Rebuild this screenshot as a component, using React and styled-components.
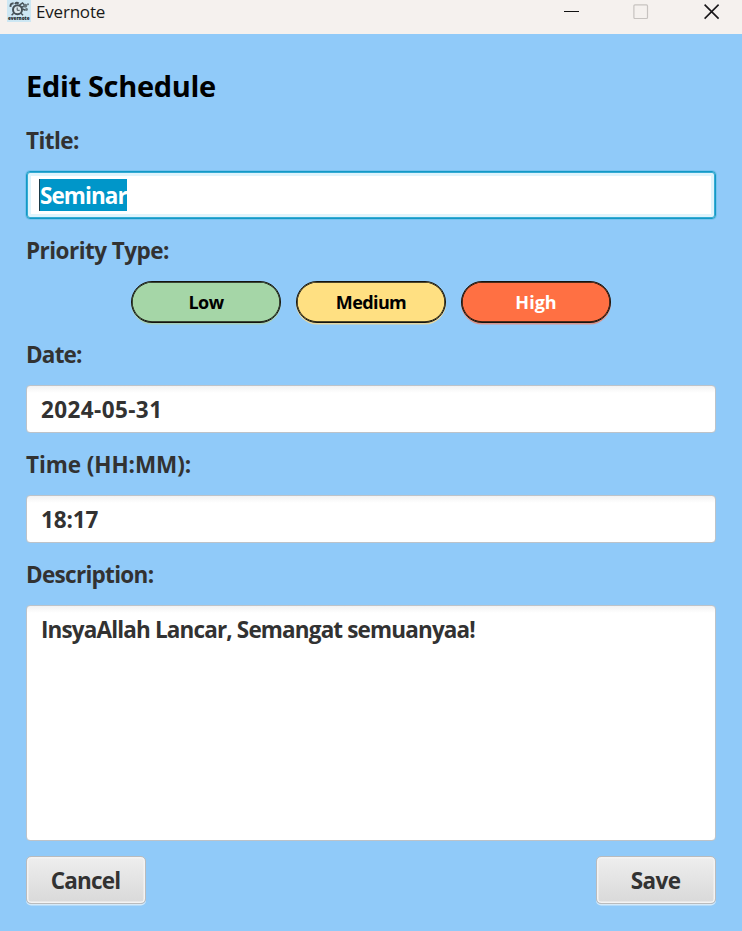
import React from "react";
import styled, { createGlobalStyle } from "styled-components";

const GlobalStyle = createGlobalStyle`
  * { box-sizing: border-box; }
  body { margin: 0; }
`;

const Window = styled.div`
  width: 742px;
  height: 931px;
  display: flex;
  flex-direction: column;
  overflow: hidden;
  background: #90caf9;
  color: #323232;
  font-family: "Open Sans", "Noto Sans", sans-serif;
`;

const TitleBar = styled.header`
  height: 34px;
  flex: none;
  display: flex;
  align-items: flex-start;
  justify-content: space-between;
  background: #f5f1ee;
  color: #191919;
`;

const AppName = styled.div`
  display: flex;
  padding-left: 7px;
  gap: 5px;
  font-size: 17px;
  line-height: 24px;
`;

const WindowControls = styled.div`
  display: flex;
  align-items: center;
  gap: 53px;
  height: 24px;
  padding-right: 22px;

  svg:last-child { margin-left: 2px; }
`;

const Form = styled.main`
  flex: 1;
  display: flex;
  flex-direction: column;
  gap: 16px;
  padding: 35px 26px 26px;
`;

const Text = styled.span`
  display: inline-block;
  white-space: pre;
  letter-spacing: ${(p) => p.$track || 0}px;
`;

const Heading = styled.h1`
  margin: 0;
  height: 40px;
  font-size: 29px;
  line-height: 33px;
  font-weight: 700;
  color: #000;
`;

const Label = styled.div`
  height: 30px;
  font-size: 22.5px;
  line-height: 31px;
  font-weight: 700;
`;

const Field = styled.div`
  height: 48px;
  padding: 8px 14px;
  border: 1px solid ${(p) => (p.$focused ? "#1399c6" : "#bdc3c9")};
  border-radius: 4px;
  background: ${(p) => (p.$focused ? "#fff" : "linear-gradient(#f2f2f2, #fff 7px)")};
  box-shadow: ${(p) =>
    p.$focused
      ? "inset 0 0 0 1px #35abd4, inset 0 0 0 4px #dff4fc, 0 0 0 1px #77c2ee"
      : "none"};
  font-size: 22.5px;
  line-height: 31px;
  font-weight: 700;
`;

const TextArea = styled(Field)`
  height: 236px;
  margin-bottom: -1px;
`;

const Selection = styled.span`
  display: block;
  width: 88px;
  height: 32px;
  margin: -1px 0 0 -2px;
  border-left: 1px solid #1d3a48;
  background: #0096c9;
  color: #fff;
  line-height: 33px;
  white-space: nowrap;
`;

const PriorityRow = styled.div`
  display: flex;
  justify-content: center;
  gap: 15px;
`;

const Pill = styled.button`
  width: 150px;
  height: 42px;
  padding: 0;
  border: 1.5px solid #14140f;
  border-radius: 21px;
  background: ${(p) => p.$fill};
  color: ${(p) => p.$ink || "#000"};
  box-shadow: inset 0 0 0 0.7px #14140f, 0 1.5px 0 ${(p) => p.$shade};
  font: 700 18px/38px "Open Sans", "Noto Sans", sans-serif;
`;

const Actions = styled.footer`
  display: flex;
  justify-content: space-between;
`;

const ActionButton = styled.button`
  width: 120px;
  height: 48px;
  padding: 1px 1px 0 0;
  border: 1.5px solid #b9bbbd;
  border-radius: 5px;
  background: linear-gradient(#eeeeee, #d9d9d9);
  box-shadow: inset 0 0 0 1.5px #f3f3f3, 0 1.5px 0 #d5e9f8;
  color: #323232;
  font: 700 22.5px/45px "Open Sans", "Noto Sans", sans-serif;
`;

const ClockLogo = () => (
  <svg width="24" height="22" viewBox="0 0 24 22">
    <rect width="24" height="22" fill="#cde7f3" />
    <g fill="none" stroke="#465157">
      <circle cx="10.5" cy="9.7" r="4.5" strokeWidth="2" fill="#dce9ed" />
      <path d="M3.6 6.8Q3 3.4 6.6 3.2M8 4Q9.5 1.8 11.7 3.5" strokeWidth="2" />
      <path d="M12.5 5.2l3-2.2 2 2M14.5 7.2l5-1.8M15.5 9l3 1.2M6.6 13.2l-2 2M14 13.2l2 2" strokeWidth="1.5" />
      <path d="M10.2 7.5v2.8h2.5" strokeWidth="1" />
    </g>
    <circle cx="18.3" cy="5.8" r="2" fill="#66757c" />
    <circle cx="21" cy="4.2" r="1" fill="#66757c" />
    <circle cx="19.5" cy="9.5" r="1.4" fill="#66757c" />
    <text x="1" y="20" textLength="21.5" lengthAdjust="spacingAndGlyphs" fontFamily="Open Sans" fontSize="5.4" fontWeight="800" fill="#172024">evernote</text>
  </svg>
);

const MinimizeIcon = () => (
  <svg width="16" height="16"><path d="M0 7.5h15" stroke="#111" /></svg>
);

const MaximizeIcon = () => (
  <svg width="16" height="16">
    <rect x=".9" y=".9" width="13.6" height="13.6" rx="1" fill="none" stroke="#c7c3c0" strokeWidth="1.2" />
  </svg>
);

const CloseIcon = () => (
  <svg width="16" height="16"><path d="M.6.6l14 14M14.6.6l-14 14" stroke="#191719" strokeWidth="1.6" /></svg>
);

export default function App() {
  return (
    <Window>
      <GlobalStyle />
      <TitleBar>
        <AppName><ClockLogo /><Text $track={-0.2}>Evernote</Text></AppName>
        <WindowControls><MinimizeIcon /><MaximizeIcon /><CloseIcon /></WindowControls>
      </TitleBar>
      <Form>
        <Heading><Text $track={-0.32}>Edit Schedule</Text></Heading>
        <Label><Text $track={-0.55}>Title:</Text></Label>
        <Field $focused><Selection><Text $track={-0.92}>Seminar</Text></Selection></Field>
        <Label><Text $track={-0.54}>Priority Type:</Text></Label>
        <PriorityRow>
          <Pill $fill="#a5d6a7" $shade="#a5cfbb"><Text $track={-0.5}>Low</Text></Pill>
          <Pill $fill="#ffe082" $shade="#e3d6a2"><Text $track={-0.6}>Medium</Text></Pill>
          <Pill $fill="#ff7043" $shade="#d8938b" $ink="#fff"><Text>High</Text></Pill>
        </PriorityRow>
        <Label><Text $track={-0.8}>Date:</Text></Label>
        <Field><Text $track={0.4}>2024-05-31</Text></Field>
        <Label><Text $track={-0.08}>Time (HH:MM):</Text></Label>
        <Field><Text $track={-0.1}>18:17</Text></Field>
        <Label><Text $track={-0.7}>Description:</Text></Label>
        <TextArea><Text $track={-0.85}>InsyaAllah Lancar, Semangat semuanyaa!</Text></TextArea>
        <Actions>
          <ActionButton><Text $track={-0.85}>Cancel</Text></ActionButton>
          <ActionButton><Text $track={-0.6}>Save</Text></ActionButton>
        </Actions>
      </Form>
    </Window>
  );
}
